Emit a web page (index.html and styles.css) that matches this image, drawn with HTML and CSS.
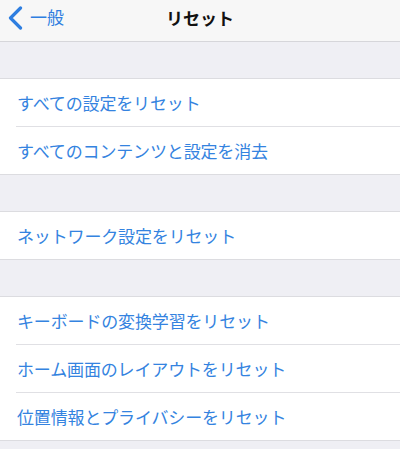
FILE: index.html
```html
<!DOCTYPE html>
<html lang="ja">
<head>
<meta charset="utf-8">
<link rel="stylesheet" href="styles.css">
</head>
<body>
<header class="nav">
  <div class="back">
    <svg class="chev" width="15" height="24" viewBox="0 0 15 24"><path d="M12.5 2 L2.5 12 L12.5 22" fill="none" stroke="#2e7ee0" stroke-width="3.2" stroke-linecap="round" stroke-linejoin="round"/></svg>
    <span class="back-label">一般</span>
  </div>
  <div class="title">リセット</div>
</header>
<main class="content">
  <div class="gap"></div>
  <section class="group">
    <div class="row">すべての設定をリセット</div>
    <div class="row">すべてのコンテンツと設定を消去</div>
  </section>
  <div class="gap"></div>
  <section class="group">
    <div class="row">ネットワーク設定をリセット</div>
  </section>
  <div class="gap"></div>
  <section class="group">
    <div class="row">キーボードの変換学習をリセット</div>
    <div class="row">ホーム画面のレイアウトをリセット</div>
    <div class="row">位置情報とプライバシーをリセット</div>
  </section>
  <div class="gap end"></div>
</main>
</body>
</html>
```
FILE: styles.css
```css
html, body {
  margin: 0;
  padding: 0;
}
body {
  width: 400px;
  height: 449px;
  overflow: hidden;
  background: #efeff4;
  font-family: "Noto Sans CJK JP", "Noto Sans", sans-serif;
}
.nav {
  height: 41px;
  background: #f7f7f7;
  border-bottom: 1px solid #d6d6da;
  display: flex;
  align-items: center;
  justify-content: center;
  position: relative;
}
.back {
  position: absolute;
  left: 8px;
  top: 0;
  height: 36px;
  display: flex;
  align-items: center;
  gap: 7px;
}
.chev {
  display: block;
  margin-top: -1px;
}
.back-label {
  color: #2e7ee0;
  font-size: 17px;
  line-height: 20px;
  margin-top: -2px;
}
.title {
  font-size: 17px;
  font-weight: 700;
  color: #111;
  line-height: 20px;
  margin-top: -6px;
}
.gap {
  height: 36px;
}
.gap.end {
  height: 9px;
}
.group {
  background: #fff;
  border-top: 1px solid #dcdce0;
  border-bottom: 1px solid #dcdce0;
  padding-left: 16px;
}
.row {
  height: 47px;
  display: flex;
  align-items: center;
  padding-left: 1px;
  color: #3483e0;
  font-size: 17px;
  letter-spacing: -0.15px;
}
.row + .row {
  border-top: 1px solid #e0e0e4;
}
```
